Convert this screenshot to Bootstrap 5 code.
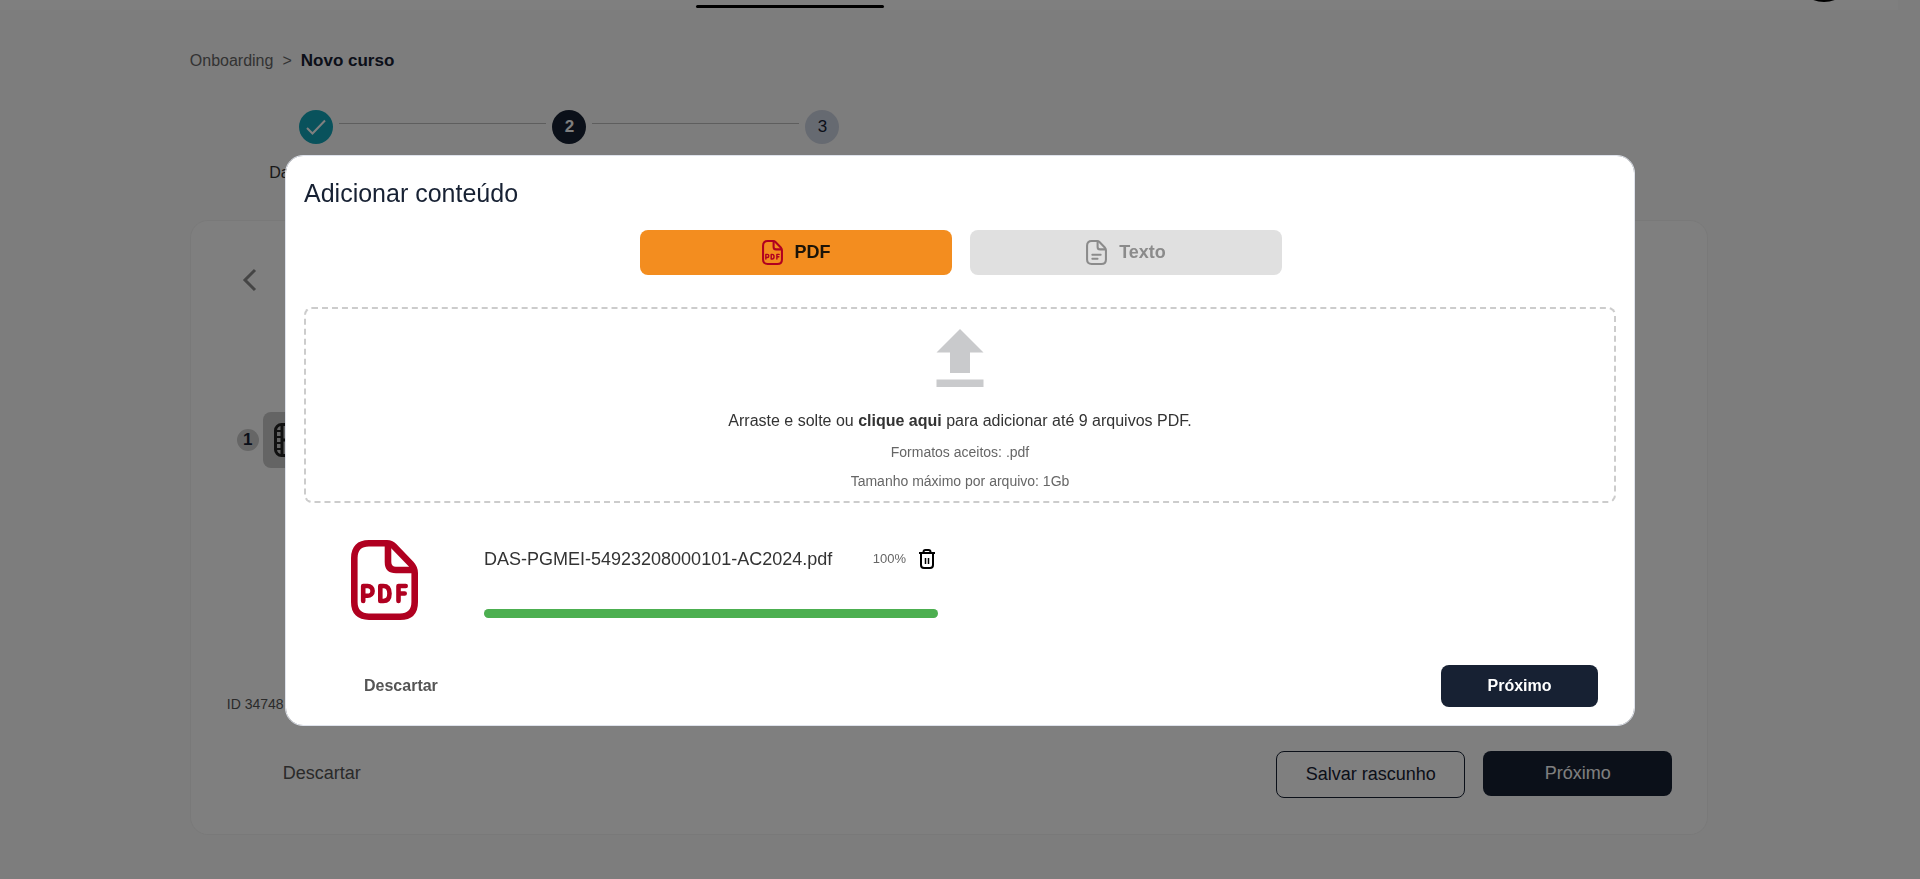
<!DOCTYPE html>
<html lang="pt-BR">
<head>
<meta charset="utf-8">
<meta name="viewport" content="width=device-width, initial-scale=1">
<title>Novo curso</title>
<link href="https://cdn.jsdelivr.net/npm/bootstrap@5.3.0/dist/css/bootstrap.min.css" rel="stylesheet">
<style>
  body { font-family: "Liberation Sans", Arial, sans-serif; font-size: 16px; line-height: 24px; color: #333; background: #fafafa; overflow: hidden; }
  a { color: inherit; text-decoration: none; }
  svg { display: block; flex: none; }
  .page { margin-right: 22px; }
  .topbar { height: 10px; background: #fff; overflow: hidden; }
  .topbar-tab { width: 188px; height: 3px; margin: 5px 0 0 696px; border-radius: 2px; background: #000; }
  .topbar-avatar { width: 60px; height: 60px; margin: -58px 44px 0 0; background: #000; }
  .content { width: 80%; margin: 0 auto; padding-top: 39px; }
  .crumbs { gap: 9px; color: #666; }
  .crumbs strong { color: #172133; font-size: 17px; }
  .steps { width: 50%; margin-top: 37px; height: 110px; }
  .step { flex: 1 1 0; position: relative; }
  .step + .step::before { content: ""; position: absolute; top: 13px; right: calc(50% + 23px); left: calc(-50% + 23px); height: 1px; background: #bdbdbd; }
  .dot { width: 34px; height: 34px; font-size: 17px; margin-bottom: 17px; }
  .dot-done { background: #12a5b8; color: #fff; }
  .dot-now { background: #172133; color: #fff; font-weight: 700; }
  .dot-next { background: #cdd4e2; color: #172133; }
  .panel { border: 1px solid #f3f3f3; border-radius: 18px; background: #fff; padding: 47px 35px 36px; }
  .back { padding: 0; border: 0; background: none; }
  .lesson { margin: 108px 0 0 11px; }
  .num { width: 22px; height: 22px; background: #ccc; color: #172133; font-size: 17px; font-weight: 700; line-height: 22px; }
  .tile { width: 66px; height: 66px; padding: 5px 0 5px 4px; }
  .tile span { display: block; height: 56px; border-radius: 8px; background: #c8c8c8; padding: 11px; }
  .course-id { font-size: 14px; margin-top: 219px; color: #555; padding-left: 1px; }
  .actions { margin-top: 35px; padding-left: 57px; gap: 18px; font-size: 18px; }
  .actions .plain { margin-top: 11px; }
  .b { --bs-btn-font-size: 18px; --bs-btn-line-height: 27px; --bs-btn-border-radius: 8px; --bs-btn-padding-x: 8px; width: 189px; }
  .b-fill { height: 45px; --bs-btn-color: #fff; --bs-btn-bg: #172133; --bs-btn-hover-bg: #172133; --bs-btn-hover-color: #fff; }
  .b-line { height: 47px; --bs-btn-color: #172133; --bs-btn-border-color: #172133; }
  .plain { border: 0; padding: 0; background: none; color: #555; line-height: 22px; }
  .modal-dialog { max-width: 1350px; padding-top: 1px; }
  .modal-content { border: 1px solid #dfe3ec; border-radius: 18px; padding: 18px; }
  .modal-title { font-size: 25px; line-height: 38px; font-weight: 400; color: #172133; }
  .tabs { gap: 18px; margin-top: 18px; padding-left: 2px; }
  .tab { width: 312px; height: 45px; gap: 12px; border: 0; border-radius: 8px; font-size: 18px; font-weight: 700; line-height: 27px; }
  .tab-on { background: #f38d1f; color: #1c1408; }
  .tab-on svg, .file-icon { color: #b00020; }
  .tab-off { background: #e0e0e0; color: #8b8b8b; }
  .drop { margin-top: 32px; border: 2px dashed #ccc; border-radius: 8px; padding: 20px 0 9px; cursor: pointer; }
  .drop svg { color: #c9cacc; margin-bottom: 22px; }
  .drop p { margin-bottom: 1px; }
  .drop small { font-size: 14px; line-height: 21px; margin-top: 8px; color: #666; }
  .file { margin: 37px 0 0 47px; gap: 66px; }
  .file-info { width: 454px; padding-top: 6px; }
  .file-name { font-size: 18px; line-height: 27px; }
  .pct { font-size: 13px; color: #666; margin-right: 13px; }
  .trash { margin-right: 3px; }
  .progress { height: 9px; border-radius: 5px; margin-top: 36px; --bs-progress-bar-bg: #4caf50; }
  .foot { margin-top: 45px; padding: 0 18px 0 60px; }
  .foot .b { width: 157px; height: 42px; --bs-btn-font-size: 16px; --bs-btn-line-height: 24px; --bs-btn-font-weight: 700; }
  .foot .plain { font-weight: 700; }
</style>
</head>
<body>
<svg class="d-none" aria-hidden="true">
  <symbol id="sheet" viewBox="0 0 67 80">
    <g fill="none" stroke="currentColor" stroke-width="6.6" stroke-linejoin="round">
      <path d="M18 3.300H36q4 0 7 3L60 24q3.700 4 3.700 9V62q0 14.700-14.700 14.700H18Q3.300 76.700 3.300 62V18Q3.300 3.300 18 3.300Z"/>
      <path d="M37 4V22q0 8 8 8H63"/>
    </g>
  </symbol>
  <symbol id="pdf" viewBox="0 0 67 80">
    <use href="#sheet"/>
    <g fill="none" stroke="currentColor" stroke-width="4.600" stroke-linecap="round" stroke-linejoin="round">
      <path d="M12.200 61V46h4.500a4.900 4.900 0 0 1 0 9.800H12.200M29.300 46h3q6.200 0 6.200 7.500t-6.200 7.500h-3ZM47.500 61V46h7.200M47.500 53.500h6.200"/>
    </g>
  </symbol>
</svg>

<div class="page">
  <header class="topbar d-flex justify-content-between">
    <div class="topbar-tab"></div>
    <div class="topbar-avatar rounded-circle"></div>
  </header>
  <main class="content">
    <nav class="crumbs d-flex" aria-label="Trilha">
      <a href="#">Onboarding</a><span>&gt;</span><strong>Novo curso</strong>
    </nav>
    <div class="steps d-flex text-center">
      <div class="step">
        <div class="dot dot-done rounded-circle mx-auto d-flex align-items-center justify-content-center">
          <svg width="22" height="22" viewBox="0 0 22 22" fill="none" stroke="currentColor" stroke-width="2"><path d="M2 12l5.500 5.500L20 4.500"/></svg>
        </div>
        <div>Dados gerais</div>
      </div>
      <div class="step"><div class="dot dot-now rounded-circle mx-auto d-flex align-items-center justify-content-center">2</div></div>
      <div class="step"><div class="dot dot-next rounded-circle mx-auto d-flex align-items-center justify-content-center">3</div></div>
    </div>
    <section class="panel">
      <button class="back" type="button" aria-label="Voltar">
        <svg width="32" height="24" viewBox="0 0 32 24" fill="none" stroke="#8a8a8a" stroke-width="3"><path d="M29 2L19 12l10 10"/></svg>
      </button>
      <div class="lesson d-flex align-items-center">
        <div class="num rounded-circle text-center">1</div>
        <div class="tile"><span>
          <svg width="34" height="34" viewBox="0 0 34 34" fill="none" stroke="#222" stroke-width="3"><rect x="1.500" y="1.500" width="31" height="31" rx="6"/><path d="M8 2v30M26 2v30M8 17h18"/><path stroke-width="2" d="M2 8h6M2 14h6M2 20h6M2 26h6M26 8h6M26 14h6M26 20h6M26 26h6"/></svg>
        </span></div>
      </div>
      <div class="course-id">ID 34748</div>
      <div class="actions d-flex align-items-start">
        <button type="button" class="plain me-auto">Descartar</button>
        <button type="button" class="btn b b-line">Salvar rascunho</button>
        <button type="button" class="btn b b-fill">Próximo</button>
      </div>
    </section>
  </main>
</div>

<div class="modal-backdrop show"></div>
<div class="modal d-block" tabindex="-1" role="dialog" aria-labelledby="modal-title">
  <div class="modal-dialog modal-dialog-centered">
    <div class="modal-content">
      <h1 class="modal-title" id="modal-title">Adicionar conteúdo</h1>
      <div class="tabs d-flex justify-content-center">
        <button type="button" class="tab tab-on d-flex align-items-center justify-content-center">
          <svg width="21" height="25"><use href="#pdf"/></svg>PDF
        </button>
        <button type="button" class="tab tab-off d-flex align-items-center justify-content-center">
          <svg width="21" height="25" viewBox="0 0 67 80"><use href="#sheet" width="67" height="80"/><path d="M20 47h27M20 60h17" stroke="currentColor" stroke-width="6" stroke-linecap="round"/></svg>Texto
        </button>
      </div>
      <div class="drop d-flex flex-column align-items-center">
        <svg width="48" height="58" viewBox="0 0 48 58" fill="currentColor"><path d="M24 0L47.500 23.500H34V44H14V23.500H.5ZM.5 50.500h47v7.500H.5Z"/></svg>
        <p>Arraste e solte ou <strong>clique aqui</strong> para adicionar até 9 arquivos PDF.</p>
        <small>Formatos aceitos: .pdf</small>
        <small>Tamanho máximo por arquivo: 1Gb</small>
      </div>
      <div class="file d-flex">
        <svg class="file-icon" width="67" height="80"><use href="#pdf"/></svg>
        <div class="file-info">
          <div class="d-flex align-items-center">
            <span class="file-name me-auto">DAS-PGMEI-54923208000101-AC2024.pdf</span>
            <span class="pct">100%</span>
            <button type="button" class="plain trash" aria-label="Excluir">
              <svg width="16" height="20" viewBox="0 0 16 20" fill="none" stroke="#000" stroke-width="2"><path d="M0 4h16M4.500 4V3q0-2 2-2h3q2 0 2 2v1M2 4V16q0 3 3 3h6q3 0 3-3V4"/><path stroke-width="1.500" d="M6.500 9v6M9.500 9v6"/></svg>
            </button>
          </div>
          <div class="progress" role="progressbar" aria-label="Envio" aria-valuenow="100" aria-valuemin="0" aria-valuemax="100"><div class="progress-bar" style="width:100%"></div></div>
        </div>
      </div>
      <div class="foot d-flex align-items-center justify-content-between">
        <button type="button" class="plain">Descartar</button>
        <button type="button" class="btn b b-fill">Próximo</button>
      </div>
    </div>
  </div>
</div>
<script src="https://cdn.jsdelivr.net/npm/bootstrap@5.3.0/dist/js/bootstrap.bundle.min.js"></script>
</body>
</html>
